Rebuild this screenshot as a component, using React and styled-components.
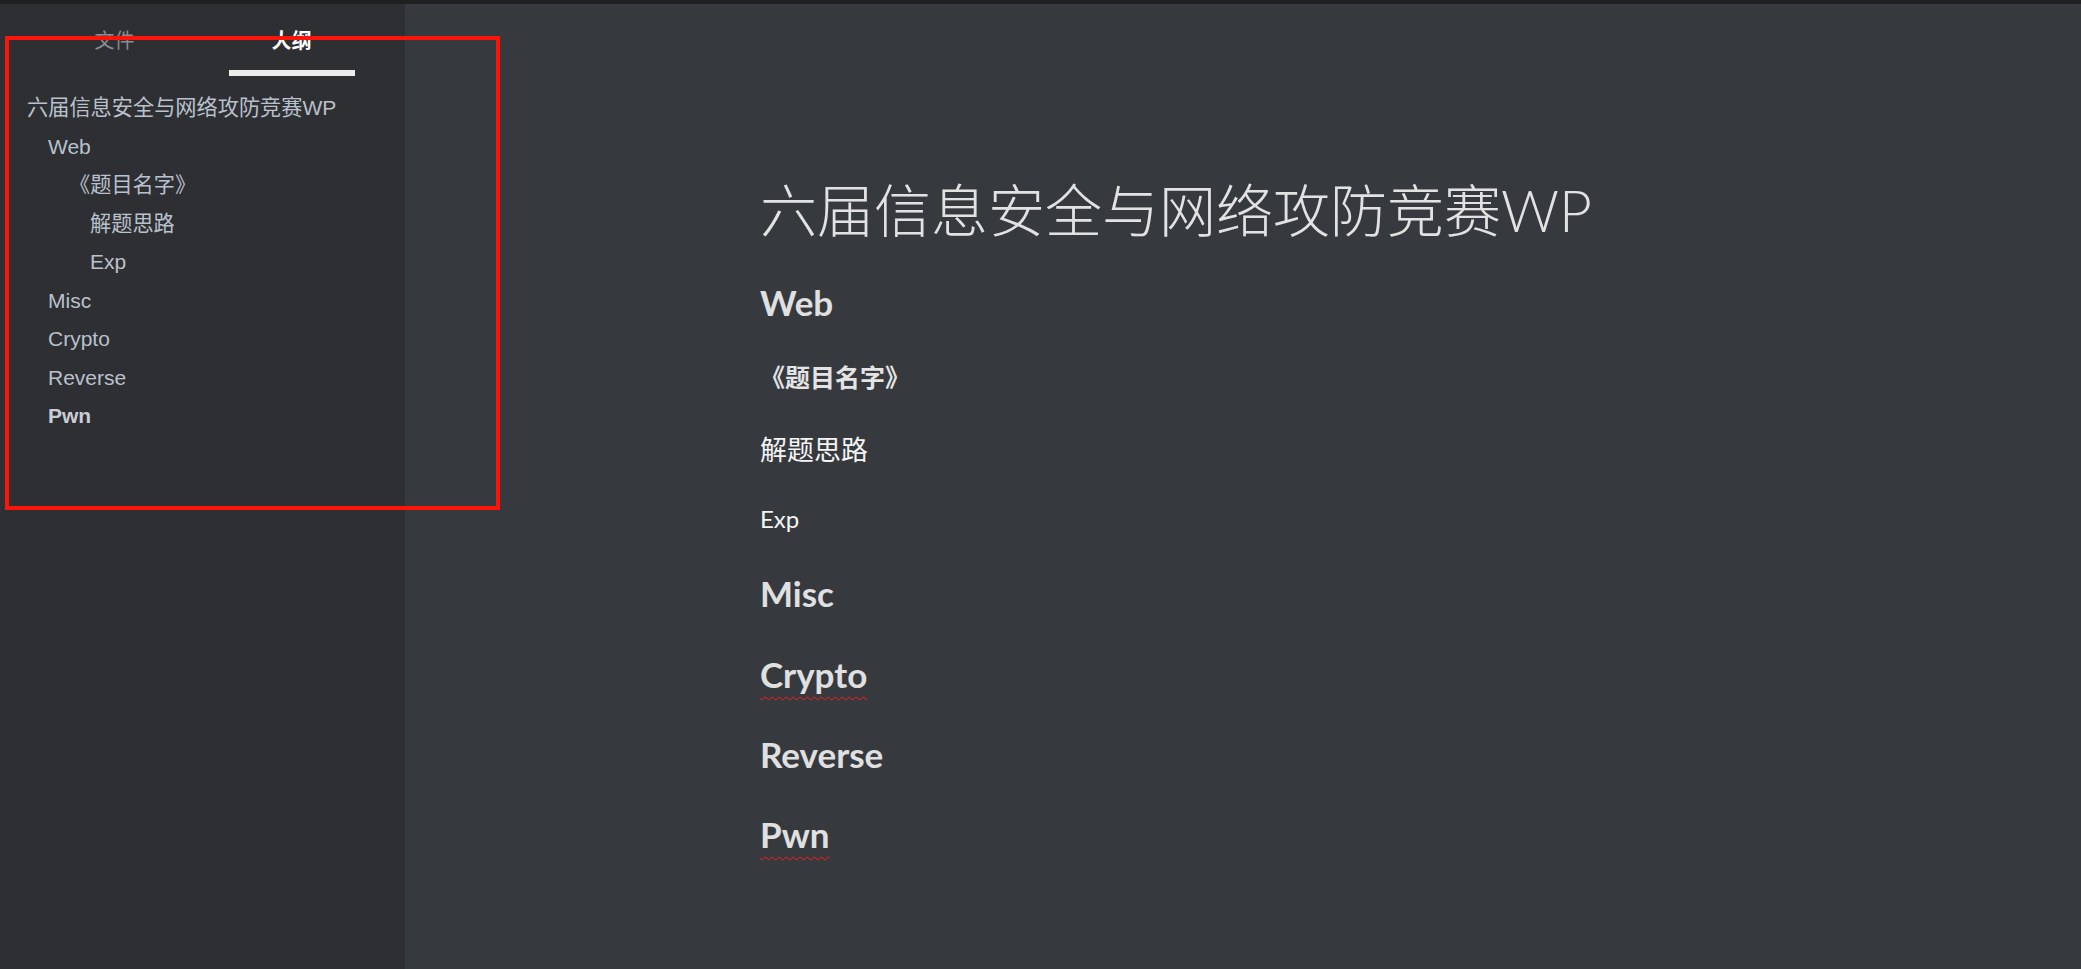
import React from "react";
import styled, { createGlobalStyle } from "styled-components";

const GlobalStyle = createGlobalStyle`
  html, body {
    margin: 0;
    padding: 0;
    height: 100%;
    overflow: hidden;
    background: #363a3f;
  }
  #root {
    height: 100%;
  }
`;

const Window = styled.div`
  position: relative;
  height: 100vh;
  display: flex;
  flex-direction: column;
  background: #363a3f;
`;

const TopBar = styled.div`
  height: 4px;
  flex: none;
  background: #1f2021;
`;

const Body = styled.div`
  flex: 1;
  display: flex;
  min-height: 0;
`;

const Sidebar = styled.aside`
  width: 405px;
  flex: none;
  background: #2e2f33;
  display: flex;
  flex-direction: column;
  font-family: "Liberation Sans", Arial, "Noto Sans CJK SC", sans-serif;
`;

const Tabs = styled.div`
  display: flex;
  padding: 21px 0 0 26px;
`;

const Tab = styled.div`
  width: 177px;
  display: flex;
  flex-direction: column;
  align-items: center;
  font-family: "Noto Sans CJK SC", sans-serif;
  font-size: 20px;
  line-height: 30px;
  font-weight: ${(props) => (props.active ? "700" : "400")};
  color: ${(props) => (props.active ? "#ffffff" : "#8a8d92")};

  &::after {
    content: "";
    margin-top: 15px;
    width: 126px;
    height: 6px;
    background: ${(props) => (props.active ? "#ececec" : "transparent")};
  }
`;

const Outline = styled.ul`
  list-style: none;
  margin: 0;
  padding: 13px 0 0 27px;
`;

const OutlineItem = styled.li`
  padding-left: ${(props) => props.level * 21}px;
  font-size: 21px;
  line-height: 38.5px;
  height: 38.5px;
  white-space: nowrap;
  color: ${(props) => (props.active ? "#c9ced6" : "#b9c1cc")};
  font-weight: ${(props) => (props.active ? "700" : "400")};
`;

const Han = styled.span`
  font-family: "Noto Sans CJK SC", sans-serif;
  font-size: 21.2px;
  line-height: 1;
`;

const Main = styled.main`
  flex: 1;
  padding: 166px 0 0 355px;
  font-family: Lato, "Noto Sans CJK SC", sans-serif;
  color: #dedede;
`;

const Title = styled.h1`
  margin: 0;
  font-size: 57px;
  line-height: 80px;
  font-weight: 300;
  color: #e2e2e2;
  white-space: nowrap;
`;

const Section = styled.h2`
  margin: ${(props) => (props.first ? "28px" : "32.3px")} 0 0;
  font-size: 35px;
  line-height: 48px;
  font-weight: 700;
  color: #e0e0e0;
  text-decoration: ${(props) =>
    props.misspelled ? "underline wavy #ff1a1a" : "none"};
  text-decoration-thickness: 1px;
  text-underline-offset: 8px;
  text-decoration-skip-ink: none;
`;

const Problem = styled.h3`
  margin: 31px 0 0;
  font-size: 25px;
  line-height: 40px;
  font-weight: 700;
  color: #e4e4e4;
`;

const Sub = styled.h4`
  margin: 33px 0 0;
  font-size: 27px;
  line-height: 40px;
  font-weight: 400;
  color: #f4f4f4;
`;

const Minor = styled.h5`
  margin: 31px 0 0;
  font-size: 24px;
  line-height: 36px;
  font-weight: 400;
  color: #f4f4f4;
`;

const Highlight = styled.div`
  position: absolute;
  left: 5px;
  top: 36px;
  width: 495px;
  height: 474px;
  box-sizing: border-box;
  border: 4px solid #ff140a;
  pointer-events: none;
`;

const outline = [
  { level: 0, text: <><Han>六届信息安全与网络攻防竞赛</Han>WP</> },
  { level: 1, text: "Web" },
  { level: 2, text: <Han>《题目名字》</Han> },
  { level: 3, text: <Han>解题思路</Han> },
  { level: 3, text: "Exp" },
  { level: 1, text: "Misc" },
  { level: 1, text: "Crypto" },
  { level: 1, text: "Reverse" },
  { level: 1, text: "Pwn", active: true },
];

const App = () => {
  return (
    <Window>
      <GlobalStyle />
      <TopBar />
      <Body>
        <Sidebar>
          <Tabs>
            <Tab>文件</Tab>
            <Tab active>大纲</Tab>
          </Tabs>
          <Outline>
            {outline.map((item, i) => (
              <OutlineItem key={i} level={item.level} active={item.active}>
                {item.text}
              </OutlineItem>
            ))}
          </Outline>
        </Sidebar>
        <Main>
          <Title>六届信息安全与网络攻防竞赛WP</Title>
          <Section first>Web</Section>
          <Problem>《题目名字》</Problem>
          <Sub>解题思路</Sub>
          <Minor>Exp</Minor>
          <Section>Misc</Section>
          <Section misspelled>Crypto</Section>
          <Section>Reverse</Section>
          <Section misspelled>Pwn</Section>
        </Main>
      </Body>
      <Highlight />
    </Window>
  );
};

export default App;
